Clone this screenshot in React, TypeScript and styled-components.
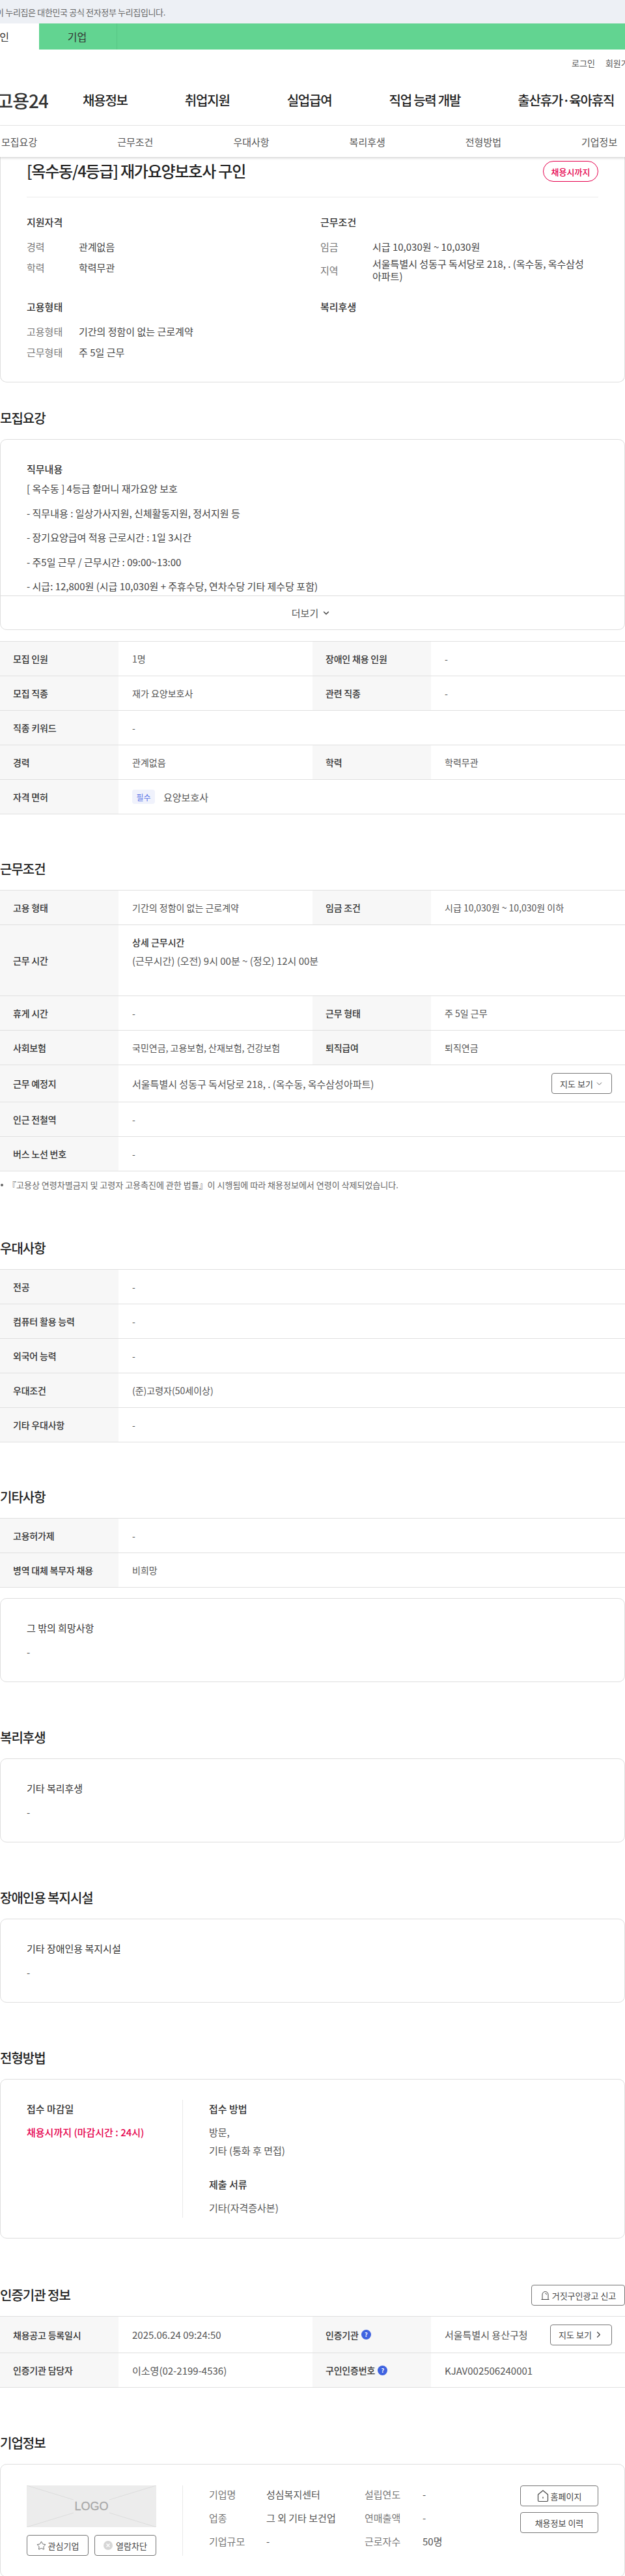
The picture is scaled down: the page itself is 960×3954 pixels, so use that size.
import React from 'react';
import styled, { createGlobalStyle } from 'styled-components';
import { ChevronDown, ChevronRight, Star } from 'lucide-react';

const GlobalStyle = createGlobalStyle`
  html, body {
    margin: 0;
    padding: 0;
    background: #fff;
  }
  body {
    font-family: "Noto Sans CJK KR", "Noto Sans", sans-serif;
    color: #333;
    overflow-x: hidden;
  }
  * {
    box-sizing: border-box;
  }
`;

const Page = styled.div`
  width: 960px;
  height: 3954px;
  overflow: hidden;
`;

/* header */
const GovBar = styled.div`
  height: 36px;
  background: #edf0f5;
  display: flex;
  align-items: center;
`;

const GovText = styled.div`
  width: 254px;
  display: flex;
  justify-content: flex-end;
  overflow: hidden;
  white-space: nowrap;
  font-size: 13px;
  letter-spacing: -0.35px;
  color: #666;
`;

const GreenBar = styled.div`
  height: 40px;
  background: #62d491;
  display: flex;
`;

const MemberTab = styled.div<{ $active?: boolean }>`
  width: ${(p) => (p.$active ? '60px' : '120px')};
  display: flex;
  align-items: center;
  justify-content: ${(p) => (p.$active ? 'flex-end' : 'center')};
  padding-right: ${(p) => (p.$active ? '46px' : '2px')};
  overflow: hidden;
  white-space: nowrap;
  font-size: 16px;
  color: #333;
  background: ${(p) => (p.$active ? '#fff' : 'transparent')};
  border-right: ${(p) => (p.$active ? 'none' : '1px solid #58c785')};
`;

const UtilRow = styled.div`
  height: 40px;
  display: flex;
  align-items: center;
  gap: 16px;
  padding-left: 878px;
  font-size: 13px;
  color: #555;
  white-space: nowrap;
`;

const MainNav = styled.div`
  height: 77px;
  display: flex;
  align-items: center;
  gap: 88px;
  padding-bottom: 1px;
  border-bottom: 1px solid #e5e5e5;
  white-space: nowrap;
`;

const Brand = styled.div`
  width: 74px;
  margin-right: -35px;
  display: flex;
  justify-content: flex-end;
  overflow: hidden;
  font-size: 28px;
  font-weight: 500;
  letter-spacing: -1px;
  color: #333;
`;

const NavItem = styled.div`
  font-size: 20px;
  font-weight: 500;
  letter-spacing: -1.2px;
  color: #222;
`;

const SubNav = styled.div`
  position: relative;
  z-index: 2;
  height: 48px;
  display: flex;
  align-items: center;
  gap: 123px;
  padding: 0 0 0 2px;
  background: #fff;
  box-shadow: 0 2px 3px rgba(0, 0, 0, 0.16);
`;

const SubNavItem = styled.div`
  font-size: 15px;
  color: #555;
  white-space: nowrap;
`;

/* cards */
const Card = styled.div<{ $flat?: boolean }>`
  border: 1px solid #dedede;
  border-top: ${(p) => (p.$flat ? 'none' : '1px solid #dedede')};
  border-radius: ${(p) => (p.$flat ? '0 0 10px 10px' : '10px')};
  background: #fff;
`;

const SummaryCard = styled(Card)`
  padding: 4px 40px 26px;
`;

const TitleRow = styled.div`
  height: 58px;
  display: flex;
  justify-content: space-between;
  align-items: flex-start;
  border-bottom: 1px solid #eaeaea;
`;

const JobTitle = styled.h1`
  margin: 0;
  font-size: 24px;
  line-height: 34px;
  font-weight: 500;
  letter-spacing: -1.2px;
  color: #222;
`;

const StatusBadge = styled.div`
  margin-top: 2px;
  width: 85px;
  height: 32px;
  display: flex;
  align-items: center;
  justify-content: center;
  border: 1px solid #e6004d;
  border-radius: 16px;
  font-size: 13px;
  font-weight: 500;
  color: #e6004d;
`;

const SummaryGrid = styled.div`
  margin-top: 27px;
  display: grid;
  grid-template-columns: 451px 1fr;
  grid-template-rows: 130px auto;
`;

const GroupTitle = styled.div`
  height: 22px;
  margin-bottom: 14px;
  line-height: 22px;
  font-size: 15px;
  font-weight: 500;
  color: #333;
`;

const FactRow = styled.div<{ $wrapped?: boolean }>`
  display: flex;
  align-items: center;
  min-height: 24px;
  margin-bottom: ${(p) => (p.$wrapped ? '0' : '8px')};
  margin-top: ${(p) => (p.$wrapped ? '-3px' : '0')};
  font-size: 15px;
  line-height: 19px;
`;

const FactLabel = styled.div`
  width: 80px;
  flex: none;
  color: #777;
`;

const FactValue = styled.div`
  max-width: 338px;
  color: #444;
`;

const Section = styled.section<{ $gap?: number }>`
  margin-top: ${(p) => p.$gap ?? 71}px;
`;

const SectionHead = styled.div`
  height: 32px;
  margin-bottom: 16px;
  display: flex;
  align-items: center;
  justify-content: space-between;
`;

const Heading = styled.h2`
  margin: 0 0 18px;
  font-size: 20px;
  line-height: 28px;
  font-weight: 500;
  letter-spacing: -1px;
  color: #222;

  ${SectionHead} & {
    margin: 0;
  }
`;

const DutyBody = styled.div`
  height: 239px;
  overflow: hidden;
  padding: 34px 40px 0;
  font-size: 15px;
  color: #444;
`;

const DutyTitle = styled.div`
  height: 22px;
  line-height: 22px;
  font-weight: 500;
  color: #333;
`;

const DutyLine = styled.div`
  line-height: 37.6px;
  margin-top: 0;
  white-space: nowrap;
  &:first-of-type {
    margin-top: 3px;
  }
`;

const MoreRow = styled.div`
  height: 52px;
  border-top: 1px solid #dedede;
  display: flex;
  align-items: center;
  justify-content: center;
  gap: 5px;
  padding-right: 4px;
  font-size: 15px;
  color: #555;
`;

/* tables */
const InfoTable = styled.div<{ $gap?: number }>`
  margin-top: ${(p) => p.$gap ?? 0}px;
  border-top: 1px solid #e0e0e0;
`;

const Row = styled.div<{ $height?: number }>`
  display: flex;
  min-height: ${(p) => p.$height ?? 53}px;
  border-bottom: 1px solid #e0e0e0;
`;

const Label = styled.div`
  width: 182px;
  flex: none;
  display: flex;
  align-items: center;
  gap: 4px;
  padding-left: 20px;
  background: #f7f7f7;
  font-size: 14px;
  font-weight: 500;
  letter-spacing: -0.2px;
  color: #333;
`;

const Value = styled.div<{ $half?: boolean; $large?: boolean }>`
  ${(p) => (p.$half ? 'width: 298px; flex: none;' : 'flex: 1;')}
  display: flex;
  align-items: center;
  justify-content: space-between;
  padding: 0 20px 0 21px;
  font-size: ${(p) => (p.$large ? '15px' : '14px')};
  color: #555;
  white-space: nowrap;
`;

const ScheduleValue = styled.div`
  flex: 1;
  padding: 15px 21px 0;
  font-size: 15px;
  color: #555;
`;

const ScheduleTitle = styled.div`
  line-height: 22px;
  font-size: 14px;
  font-weight: 500;
  color: #333;
  margin-bottom: 7px;
`;

const RequiredTag = styled.span`
  width: 35px;
  height: 22px;
  margin-right: 13px;
  display: inline-flex;
  align-items: center;
  justify-content: center;
  border-radius: 4px;
  background: #f0f2fc;
  font-size: 12px;
  color: #5b75e6;
`;

const LicenseValue = styled.div`
  flex: 1;
  display: flex;
  align-items: center;
  padding-left: 21px;
  font-size: 15px;
  color: #555;
`;

const Note = styled.div`
  margin-top: 11px;
  display: flex;
  align-items: center;
  gap: 7px;
  padding-left: 1px;
  font-size: 13px;
  line-height: 20px;
  color: #666;
  white-space: nowrap;
  &::before {
    content: '';
    width: 4px;
    height: 4px;
    border-radius: 50%;
    background: #666;
  }
`;

const OutlineButton = styled.div<{ $width?: number; $height?: number }>`
  width: ${(p) => p.$width ?? 95}px;
  height: ${(p) => p.$height ?? 32}px;
  flex: none;
  display: flex;
  align-items: center;
  justify-content: center;
  gap: 3px;
  border: 1px solid #777;
  border-radius: 4px;
  background: #fff;
  font-size: 13px;
  color: #444;
  white-space: nowrap;
`;

const HelpMark = styled.span`
  width: 15px;
  height: 15px;
  display: inline-flex;
  align-items: center;
  justify-content: center;
  border-radius: 50%;
  background: #3f63e0;
  font-size: 9px;
  font-weight: 700;
  color: #fff;
`;

/* note cards */
const NoteCard = styled(Card)<{ $gap?: number }>`
  margin-top: ${(p) => p.$gap ?? 0}px;
  padding: 34px 40px 33px;
`;

const NoteTitle = styled.div`
  height: 22px;
  margin-bottom: 14px;
  line-height: 22px;
  font-size: 15px;
  color: #333;
`;

const NoteText = styled.div`
  line-height: 24px;
  font-size: 15px;
  color: #555;
`;

/* application */
const FlowCard = styled(Card)`
  padding: 31px 40px;
  display: flex;
`;

const DeadlineCol = styled.div`
  width: 240px;
  flex: none;
  border-right: 1px solid #eaeaea;
`;

const MethodCol = styled.div`
  flex: 1;
  padding-left: 40px;
  height: 181px;
`;

const BlockTitle = styled.div<{ $gap?: number }>`
  margin: ${(p) => p.$gap ?? 0}px 0 8px;
  line-height: 28px;
  font-size: 15px;
  font-weight: 500;
  color: #333;
`;

const BlockText = styled.div<{ $accent?: boolean }>`
  line-height: 28px;
  font-size: 15px;
  font-weight: ${(p) => (p.$accent ? 500 : 400)};
  color: ${(p) => (p.$accent ? '#e6004d' : '#555')};
`;

/* company */
const CompanyCard = styled(Card)`
  padding: 32px 40px;
  display: flex;
`;

const LogoCol = styled.div`
  width: 240px;
  flex: none;
  height: 108px;
  border-right: 1px solid #eaeaea;
`;

const LogoBox = styled.div`
  position: relative;
  width: 199px;
  height: 64px;
  display: flex;
  align-items: center;
  justify-content: center;
  background: #ececec;
  font-family: "Liberation Sans", sans-serif;
  font-size: 18px;
  color: #a8a8a8;
  -webkit-text-stroke: 0.3px #a8a8a8;
`;

const LogoLines = styled.svg`
  position: absolute;
  inset: 0;
`;

const LogoActions = styled.div`
  width: 199px;
  margin-top: 12px;
  display: flex;
  justify-content: space-between;
`;

const CompanyGrid = styled.div`
  flex: 1;
  margin-left: 40px;
  display: grid;
  grid-template-columns: 88px 151px 89px 1fr;
  grid-auto-rows: 26px;
  row-gap: 10px;
  align-items: center;
  font-size: 15px;
  color: #555;
`;

const CompanyKey = styled.div`
  color: #777;
`;

const CompanyActions = styled.div`
  width: 120px;
  flex: none;
  display: flex;
  flex-direction: column;
  gap: 9px;
`;

const BlockedMark = styled.svg`
  margin-right: 2px;
`;

const SirenIcon = () => (
  <svg width="15" height="16" viewBox="0 0 15 16" fill="none" stroke="#444" strokeWidth="1">
    <path d="M3 14V7a4.5 4.5 0 0 1 9 0v7" />
    <path d="M1.5 14.5h12" />
    <path d="M7.5 5.2a2 2 0 0 1 2 2" />
  </svg>
);

const HomeIcon = () => (
  <svg width="18" height="20" viewBox="0 0 18 20" fill="none" stroke="#444" strokeWidth="1.2">
    <path d="M1.5 8L9 1.8 16.5 8v9a1.5 1.5 0 0 1-1.5 1.5H3A1.5 1.5 0 0 1 1.5 17z" strokeLinejoin="round" />
    <path d="M9 11.5v2.5" />
  </svg>
);

const dutyLines = [
  '[ 옥수동 ] 4등급 할머니 재가요양 보호',
  '- 직무내용 : 일상가사지원, 신체활동지원, 정서지원 등',
  '- 장기요양급여 적용 근로시간 : 1일 3시간',
  '- 주5일 근무 /  근무시간 : 09:00~13:00',
  '- 시급: 12,800원 (시급 10,030원 + 주휴수당, 연차수당 기타 제수당 포함)',
];

const subNavItems = ['모집요강', '근무조건', '우대사항', '복리후생', '전형방법', '기업정보'];

const App: React.FC = () => {
  return (
    <Page>
      <GlobalStyle />
      <GovBar>
        <GovText>이 누리집은 대한민국 공식 전자정부 누리집입니다.</GovText>
      </GovBar>
      <GreenBar>
        <MemberTab $active>개인</MemberTab>
        <MemberTab>기업</MemberTab>
      </GreenBar>
      <UtilRow>
        <span>로그인</span>
        <span>회원가입</span>
      </UtilRow>
      <MainNav>
        <Brand>고용24</Brand>
        <NavItem>채용정보</NavItem>
        <NavItem>취업지원</NavItem>
        <NavItem>실업급여</NavItem>
        <NavItem>직업 능력 개발</NavItem>
        <NavItem>출산휴가·육아휴직</NavItem>
      </MainNav>
      <SubNav>
        {subNavItems.map((item) => (
          <SubNavItem key={item}>{item}</SubNavItem>
        ))}
      </SubNav>

      <SummaryCard $flat>
        <TitleRow>
          <JobTitle>[옥수동/4등급] 재가요양보호사 구인</JobTitle>
          <StatusBadge>채용시까지</StatusBadge>
        </TitleRow>
        <SummaryGrid>
          <div>
            <GroupTitle>지원자격</GroupTitle>
            <FactRow>
              <FactLabel>경력</FactLabel>
              <FactValue>관계없음</FactValue>
            </FactRow>
            <FactRow>
              <FactLabel>학력</FactLabel>
              <FactValue>학력무관</FactValue>
            </FactRow>
          </div>
          <div>
            <GroupTitle>근무조건</GroupTitle>
            <FactRow>
              <FactLabel>임금</FactLabel>
              <FactValue>시급 10,030원 ~ 10,030원</FactValue>
            </FactRow>
            <FactRow $wrapped>
              <FactLabel>지역</FactLabel>
              <FactValue>서울특별시 성동구 독서당로 218, . (옥수동, 옥수삼성아파트)</FactValue>
            </FactRow>
          </div>
          <div>
            <GroupTitle>고용형태</GroupTitle>
            <FactRow>
              <FactLabel>고용형태</FactLabel>
              <FactValue>기간의 정함이 없는 근로계약</FactValue>
            </FactRow>
            <FactRow>
              <FactLabel>근무형태</FactLabel>
              <FactValue>주 5일 근무</FactValue>
            </FactRow>
          </div>
          <div>
            <GroupTitle>복리후생</GroupTitle>
          </div>
        </SummaryGrid>
      </SummaryCard>

      <Section $gap={41}>
        <Heading>모집요강</Heading>
        <Card>
          <DutyBody>
            <DutyTitle>직무내용</DutyTitle>
            {dutyLines.map((line) => (
              <DutyLine key={line}>{line}</DutyLine>
            ))}
          </DutyBody>
          <MoreRow>
            더보기 <ChevronDown size={14} strokeWidth={2.5} color="#444" />
          </MoreRow>
        </Card>
        <InfoTable $gap={17}>
          <Row>
            <Label>모집 인원</Label>
            <Value $half>1명</Value>
            <Label>장애인 채용 인원</Label>
            <Value>-</Value>
          </Row>
          <Row>
            <Label>모집 직종</Label>
            <Value $half>재가 요양보호사</Value>
            <Label>관련 직종</Label>
            <Value>-</Value>
          </Row>
          <Row>
            <Label>직종 키워드</Label>
            <Value>-</Value>
          </Row>
          <Row>
            <Label>경력</Label>
            <Value $half>관계없음</Value>
            <Label>학력</Label>
            <Value>학력무관</Value>
          </Row>
          <Row>
            <Label>자격 면허</Label>
            <LicenseValue>
              <RequiredTag>필수</RequiredTag>
              요양보호사
            </LicenseValue>
          </Row>
        </InfoTable>
      </Section>

      <Section $gap={70}>
        <Heading>근무조건</Heading>
        <InfoTable>
          <Row>
            <Label>고용 형태</Label>
            <Value $half>기간의 정함이 없는 근로계약</Value>
            <Label>임금 조건</Label>
            <Value>시급 10,030원 ~ 10,030원 이하</Value>
          </Row>
          <Row $height={109}>
            <Label>근무 시간</Label>
            <ScheduleValue>
              <ScheduleTitle>상세 근무시간</ScheduleTitle>
              (근무시간) (오전) 9시 00분 ~ (정오) 12시 00분
            </ScheduleValue>
          </Row>
          <Row>
            <Label>휴게 시간</Label>
            <Value $half>-</Value>
            <Label>근무 형태</Label>
            <Value>주 5일 근무</Value>
          </Row>
          <Row>
            <Label>사회보험</Label>
            <Value $half>국민연금, 고용보험, 산재보험, 건강보험</Value>
            <Label>퇴직급여</Label>
            <Value>퇴직연금</Value>
          </Row>
          <Row $height={57}>
            <Label>근무 예정지</Label>
            <Value $large>
              서울특별시 성동구 독서당로 218, . (옥수동, 옥수삼성아파트)
              <OutlineButton $width={93}>
                지도 보기 <ChevronDown size={13} strokeWidth={1.5} />
              </OutlineButton>
            </Value>
          </Row>
          <Row>
            <Label>인근 전철역</Label>
            <Value>-</Value>
          </Row>
          <Row>
            <Label>버스 노선 번호</Label>
            <Value>-</Value>
          </Row>
        </InfoTable>
        <Note>『고용상 연령차별금지 및 고령자 고용촉진에 관한 법률』이 시행됨에 따라 채용정보에서 연령이 삭제되었습니다.</Note>
      </Section>

      <Section $gap={73}>
        <Heading>우대사항</Heading>
        <InfoTable>
          <Row>
            <Label>전공</Label>
            <Value>-</Value>
          </Row>
          <Row>
            <Label>컴퓨터 활용 능력</Label>
            <Value>-</Value>
          </Row>
          <Row>
            <Label>외국어 능력</Label>
            <Value>-</Value>
          </Row>
          <Row>
            <Label>우대조건</Label>
            <Value>(준)고령자(50세이상)</Value>
          </Row>
          <Row>
            <Label>기타 우대사항</Label>
            <Value>-</Value>
          </Row>
        </InfoTable>
      </Section>

      <Section $gap={70}>
        <Heading>기타사항</Heading>
        <InfoTable>
          <Row>
            <Label>고용허가제</Label>
            <Value>-</Value>
          </Row>
          <Row>
            <Label>병역 대체 복무자 채용</Label>
            <Value>비희망</Value>
          </Row>
        </InfoTable>
        <NoteCard $gap={16}>
          <NoteTitle>그 밖의 희망사항</NoteTitle>
          <NoteText>-</NoteText>
        </NoteCard>
      </Section>

      <Section>
        <Heading>복리후생</Heading>
        <NoteCard>
          <NoteTitle>기타 복리후생</NoteTitle>
          <NoteText>-</NoteText>
        </NoteCard>
      </Section>

      <Section>
        <Heading>장애인용 복지시설</Heading>
        <NoteCard>
          <NoteTitle>기타 장애인용 복지시설</NoteTitle>
          <NoteText>-</NoteText>
        </NoteCard>
      </Section>

      <Section>
        <Heading>전형방법</Heading>
        <FlowCard>
          <DeadlineCol>
            <BlockTitle>접수 마감일</BlockTitle>
            <BlockText $accent>채용시까지 (마감시간 : 24시)</BlockText>
          </DeadlineCol>
          <MethodCol>
            <BlockTitle>접수 방법</BlockTitle>
            <BlockText>방문,</BlockText>
            <BlockText>기타 (통화 후 면접)</BlockText>
            <BlockTitle $gap={24}>제출 서류</BlockTitle>
            <BlockText>기타(자격증사본)</BlockText>
          </MethodCol>
        </FlowCard>
      </Section>

      <Section>
        <SectionHead>
          <Heading>인증기관 정보</Heading>
          <OutlineButton $width={144}>
            <SirenIcon />
            거짓구인광고 신고
          </OutlineButton>
        </SectionHead>
        <InfoTable>
          <Row $height={56}>
            <Label>채용공고 등록일시</Label>
            <Value $half $large>2025.06.24 09:24:50</Value>
            <Label>
              인증기관 <HelpMark>?</HelpMark>
            </Label>
            <Value $large>
              서울특별시 용산구청
              <OutlineButton>
                지도 보기 <ChevronRight size={15} strokeWidth={2} />
              </OutlineButton>
            </Value>
          </Row>
          <Row>
            <Label>인증기관 담당자</Label>
            <Value $half $large>이소영(02-2199-4536)</Value>
            <Label>
              구인인증번호 <HelpMark>?</HelpMark>
            </Label>
            <Value $large>KJAV002506240001</Value>
          </Row>
        </InfoTable>
      </Section>

      <Section>
        <Heading>기업정보</Heading>
        <CompanyCard>
          <LogoCol>
            <LogoBox>
              <LogoLines width="199" height="64" viewBox="0 0 199 64" stroke="#dcdcdc" strokeWidth="1">
                <path d="M0 0L72 22M199 0L127 22M0 64L72 42M199 64L127 42" />
              </LogoLines>
              LOGO
            </LogoBox>
            <LogoActions>
              <OutlineButton>
                <Star size={15} strokeWidth={1.3} /> 관심기업
              </OutlineButton>
              <OutlineButton>
                <BlockedMark width="14" height="14" viewBox="0 0 14 14">
                  <circle cx="7" cy="7" r="7" fill="#d6d6d6" />
                  <path d="M4.5 4.5l5 5M9.5 4.5l-5 5" stroke="#fff" strokeWidth="1.4" />
                </BlockedMark>
                열람차단
              </OutlineButton>
            </LogoActions>
          </LogoCol>
          <CompanyGrid>
            <CompanyKey>기업명</CompanyKey>
            <div>성심복지센터</div>
            <CompanyKey>설립연도</CompanyKey>
            <div>-</div>
            <CompanyKey>업종</CompanyKey>
            <div>그 외 기타 보건업</div>
            <CompanyKey>연매출액</CompanyKey>
            <div>-</div>
            <CompanyKey>기업규모</CompanyKey>
            <div>-</div>
            <CompanyKey>근로자수</CompanyKey>
            <div>50명</div>
          </CompanyGrid>
          <CompanyActions>
            <OutlineButton $width={120}>
              <HomeIcon />
              홈페이지
            </OutlineButton>
            <OutlineButton $width={120}>채용정보 이력</OutlineButton>
          </CompanyActions>
        </CompanyCard>
      </Section>
    </Page>
  );
};

export default App;
